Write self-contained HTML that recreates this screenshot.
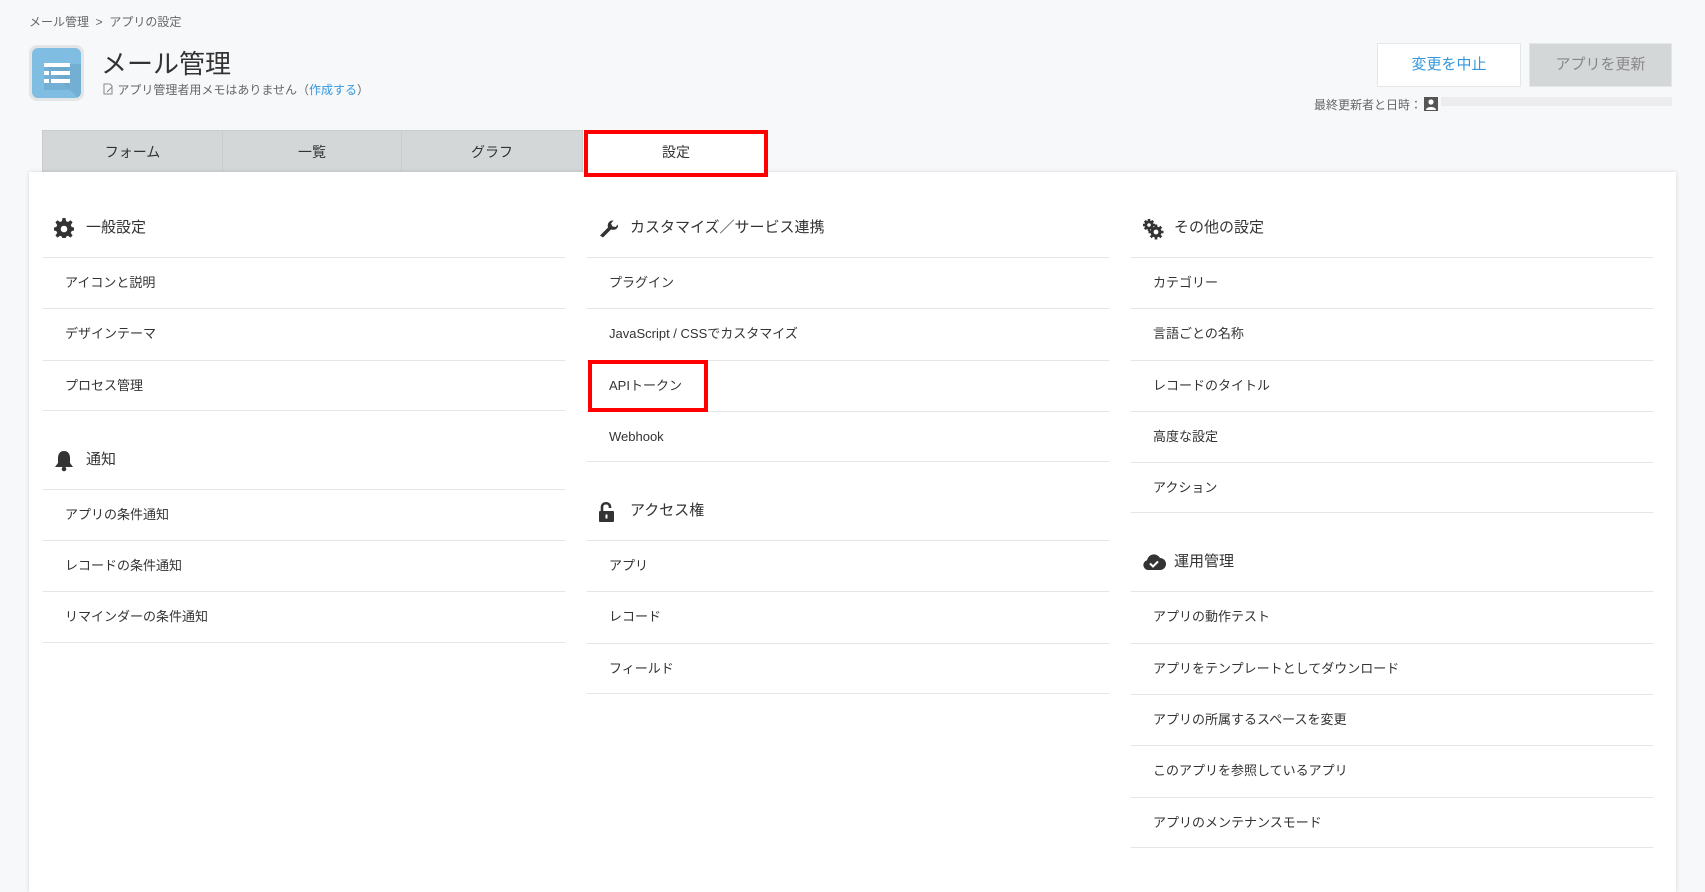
<!DOCTYPE html>
<html><head><meta charset="utf-8"><style>
*{box-sizing:border-box;margin:0;padding:0}
body{width:1705px;height:867px;overflow:hidden;background:#f7f8fa;font-family:"Liberation Sans","Noto Sans CJK JP",sans-serif;color:#333;position:relative}
.abs{position:absolute}
.bc{left:29px;top:13px;font-size:12px;color:#666}
.icon{left:29px;top:45px;width:55px;height:56px;border-radius:8px;background:#e3e5e7;padding:3px}
.icon div{width:100%;height:100%;border-radius:6px;background:#7fbde3;position:relative;overflow:hidden}
.title{left:101px;top:44px;font-size:26px;color:#333}
.memo{left:103px;top:81px;font-size:12px;color:#666}
.memo a{color:#3498db;text-decoration:none}
.btn{top:43px;height:44px;width:144px;font-size:15px;text-align:center;line-height:42px;border:1px solid #e3e7e8}
.b1{left:1377px;background:#fff;color:#3498db}
.b2{left:1529px;background:#d4d7d8;color:#888;width:143px}
.upd{left:1314px;top:96px;font-size:12px;color:#666}
.tab{top:130px;height:43px;background:#d4d7d8;border:1px solid #c9cdcf;border-bottom:none;font-size:14px;text-align:center;line-height:42px;color:#333}
.panel{left:29px;top:172px;width:1647px;height:720px;background:#fff;box-shadow:0 0 4px rgba(0,0,0,.15)}
.col{top:172px;width:522px}
.hd{height:30px;line-height:30px;font-size:15px;padding-left:43px;position:relative;margin-top:34px;margin-bottom:14px}
.hd.f{margin-top:41px}
.hd svg{position:absolute;left:11px;top:5px}
.it{height:51.3px;border-top:1px solid #e3e7e8;font-size:13px;line-height:50px;padding-left:22px}
.it.l{border-bottom:1px solid #e3e7e8}
</style></head><body>
<div class="abs bc">メール管理 &nbsp;&gt;&nbsp; アプリの設定</div>
<div class="abs icon"><div>
<svg width="49" height="50" viewBox="0 0 49 50" style="position:absolute;left:0;top:0"><path d="M12 16L49 53L49 50L49 16Z" fill="#6aa3c8" opacity=".6"/><path d="M12 16h25v26H12z" fill="#6aa3c8" opacity=".5"/><rect x="12" y="15" width="26" height="4" fill="#fff"/><rect x="12" y="23" width="5" height="4" fill="#fff"/><rect x="19" y="23" width="19" height="4" fill="#fff"/><rect x="12" y="31" width="5" height="4" fill="#fff"/><rect x="19" y="31" width="19" height="4" fill="#fff"/></svg>
</div></div>
<div class="abs title">メール管理</div>
<div class="abs memo"><svg width="11" height="12" viewBox="0 0 11 12" style="vertical-align:-1px"><path d="M1 1h6l2 2v8H1z" fill="none" stroke="#888"/><path d="M4 9l5-5" stroke="#888"/></svg> アプリ管理者用メモはありません（<a>作成する</a>）</div>
<div class="abs btn b1">変更を中止</div>
<div class="abs btn b2">アプリを更新</div>
<div class="abs upd">最終更新者と日時：</div>
<div class="abs" style="left:1424px;top:97px;width:14px;height:14px;background:#555"><svg width="14" height="14"><circle cx="7" cy="5" r="2.6" fill="#fff"/><path d="M2 13c0-4 10-4 10 0z" fill="#fff"/></svg></div>
<div class="abs" style="left:1441px;top:97px;width:231px;height:9px;background:#ececee"></div>
<div class="abs tab" style="left:42px;width:181px">フォーム</div>
<div class="abs tab" style="left:222px;width:180px">一覧</div>
<div class="abs tab" style="left:401px;width:182px">グラフ</div>
<div class="abs panel"></div>
<div class="abs" style="left:584px;top:130px;width:184px;height:47px;background:#fff;border:4px solid #f00;font-size:14px;text-align:center;line-height:37px">設定</div>

<div class="abs col" style="left:43px">
<div class="hd f"><svg width="20" height="20" viewBox="0 0 20 20"><path d="M8.5 0h3l.5 3 2 1 2.5-1.8 2.1 2.1L16.8 7l.9 2 2.3.5v3l-2.3.5-.9 2 1.8 2.5-2.1 2.1-2.5-1.8-2 .9-.5 2.6h-3l-.5-2.6-2-.9-2.5 1.8-2.1-2.1L3.2 15l-.9-2L0 12.5v-3L2.3 9l.9-2L1.4 4.3l2.1-2.1L6 4l2-1z" fill="#333"/><circle cx="10" cy="11" r="3.3" fill="#fff"/></svg>一般設定</div>
<div class="it">アイコンと説明</div><div class="it">デザインテーマ</div><div class="it l">プロセス管理</div>
<div class="hd"><svg width="20" height="22" viewBox="0 0 20 22"><path d="M10 1c4 0 6 3 6 7v5l3 4H1l3-4V8c0-4 2-7 6-7z" fill="#333"/><circle cx="10" cy="19" r="2.3" fill="#333"/></svg>通知</div>
<div class="it">アプリの条件通知</div><div class="it">レコードの条件通知</div><div class="it l">リマインダーの条件通知</div>
</div>

<div class="abs col" style="left:587px">
<div class="hd f"><svg width="20" height="20" viewBox="0 0 20 20"><path d="M2 17.5L10 9.5C9 6 11 2 15.5 2.5L13 5.5l1.5 3 3 .5L20 6.5c.5 4.5-3.5 6-7 5L5 19.5z" fill="#333"/></svg>カスタマイズ／サービス連携</div>
<div class="it">プラグイン</div><div class="it">JavaScript / CSSでカスタマイズ</div><div class="it">APIトークン</div><div class="it l">Webhook</div>
<div class="hd"><svg width="20" height="22" viewBox="0 0 20 22"><path d="M4 10V6c0-5 8-5 8 0v1" fill="none" stroke="#333" stroke-width="2.6"/><rect x="1" y="10" width="15" height="11" rx="1" fill="#333"/><rect x="7.5" y="13.5" width="2" height="4" fill="#fff"/></svg>アクセス権</div>
<div class="it">アプリ</div><div class="it">レコード</div><div class="it l">フィールド</div>
</div>
<div class="abs" style="left:588px;top:360px;width:120px;height:52px;border:4px solid #f00"></div>

<div class="abs col" style="left:1131px">
<div class="hd f"><svg width="22" height="22" viewBox="0 0 22 22"><g fill="#333"><circle cx="7" cy="7" r="4.5"/><circle cx="14" cy="14" r="5.5"/></g><g stroke="#333" stroke-width="2.6"><path d="M7 1v12M1 7h12M2.8 2.8l8.4 8.4M11.2 2.8l-8.4 8.4"/><path d="M14 6.5v15M6.5 14h15M8.7 8.7l10.6 10.6M19.3 8.7L8.7 19.3"/></g><circle cx="7" cy="7" r="1.8" fill="#fff"/><circle cx="14" cy="14" r="2.4" fill="#fff"/></svg>その他の設定</div>
<div class="it">カテゴリー</div><div class="it">言語ごとの名称</div><div class="it">レコードのタイトル</div><div class="it">高度な設定</div><div class="it l">アクション</div>
<div class="hd"><svg width="24" height="20" viewBox="0 0 24 20"><path d="M6 18a5 5 0 0 1-1-9.8A7 7 0 0 1 18 6a6 6 0 0 1 0 12z" fill="#333"/><path d="M8 11.5l3 3 5-5" fill="none" stroke="#fff" stroke-width="2"/></svg>運用管理</div>
<div class="it">アプリの動作テスト</div><div class="it">アプリをテンプレートとしてダウンロード</div><div class="it">アプリの所属するスペースを変更</div><div class="it">このアプリを参照しているアプリ</div><div class="it l">アプリのメンテナンスモード</div>
</div>
</body></html>
